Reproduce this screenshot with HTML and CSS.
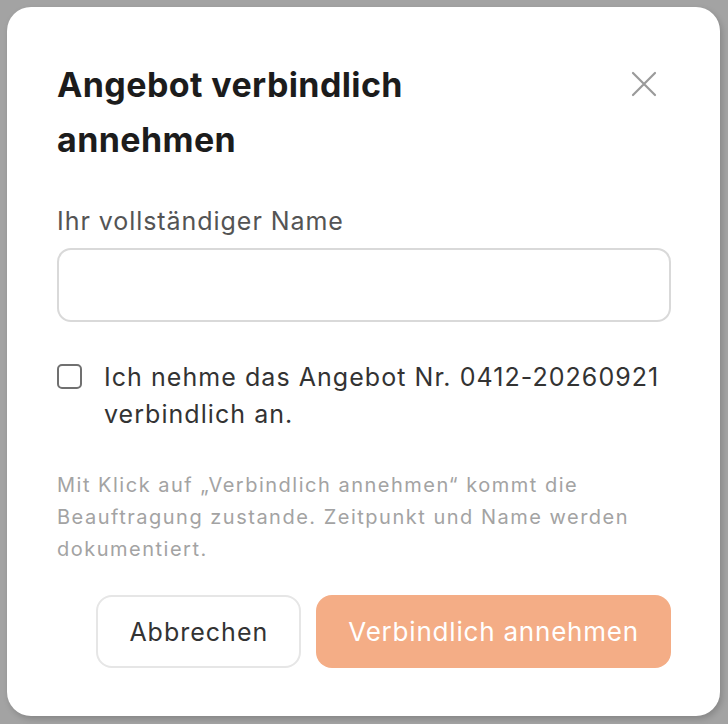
FILE: index.html
```html
<!DOCTYPE html>
<html lang="de">
<head>
    <meta charset="UTF-8">
    <meta name="viewport" content="width=device-width, initial-scale=1.0">
    <title>Angebot annehmen</title>
    <link rel="stylesheet" href="styles.css">
</head>
<body>
    <!-- Dialog -->
    <div class="modal">
        <div class="modal-header">
            <h2 class="modal-title">Angebot verbindlich annehmen</h2>
            <button class="close-btn" aria-label="Schließen">
                <svg width="26" height="26" viewBox="0 0 26 26">
                    <path d="M2 2 L24 24 M24 2 L2 24" stroke="#9a9a9a" stroke-width="2.2" stroke-linecap="round" fill="none"/>
                </svg>
            </button>
        </div>

        <div class="form-group">
            <label for="name">Ihr vollständiger Name</label>
            <input type="text" id="name">
        </div>

        <label class="check-row">
            <input type="checkbox">
            <span class="checkbox"></span>
            <span>Ich nehme das Angebot Nr. 0412-20260921 verbindlich an.</span>
        </label>

        <p class="hint">Mit Klick auf „Verbindlich annehmen“ kommt die Beauftragung zustande. Zeitpunkt und Name werden dokumentiert.</p>

        <div class="actions">
            <button class="button button-secondary">Abbrechen</button>
            <button class="button button-primary">Verbindlich annehmen</button>
        </div>
    </div>
</body>
</html>
```

FILE: styles.css
```css
* {
    margin: 0;
    padding: 0;
    box-sizing: border-box;
}

body {
    font-family: 'Inter', 'Noto Sans', sans-serif;
    background: #a3a3a3;
    padding: 7px 8px 8px 7px;
    min-height: 100vh;
}

/* Dialog */
.modal {
    background: #fff;
    border-radius: 24px;
    box-shadow: 2px 3px 6px rgba(0,0,0,0.18);
    padding: 56px 49px 48px 50px;
    height: 709px;
}

.modal-header {
    display: flex;
    justify-content: space-between;
    align-items: flex-start;
}

.modal-title {
    font-size: 34px;
    font-weight: 700;
    line-height: 55px;
    color: #1c1c1c;
    max-width: 440px;
    letter-spacing: 0.4px;
    margin-top: -6px;
}

.close-btn {
    background: none;
    border: none;
    cursor: pointer;
    margin-top: 8px;
    margin-right: 14px;
    width: 26px;
    height: 26px;
}

.close-btn svg {
    display: block;
}

.form-group {
    margin-top: 38px;
}

.form-group label {
    display: block;
    font-size: 25px;
    letter-spacing: 0.95px;
    color: #545454;
    line-height: 32px;
    margin-bottom: 11px;
}

.form-group input {
    width: 100%;
    height: 74px;
    border: 2px solid #d9d9d9;
    border-radius: 14px;
    font-size: 22px;
    padding: 0 18px;
    font-family: inherit;
}

.check-row {
    display: flex;
    align-items: flex-start;
    gap: 22px;
    margin-top: 37px;
    font-size: 25px;
    letter-spacing: 1.05px;
    line-height: 37px;
    color: #333;
    cursor: pointer;
}

.check-row input {
    display: none;
}

.checkbox {
    flex: none;
    width: 25px;
    height: 25px;
    border: 2px solid #707070;
    border-radius: 5px;
    margin-top: 5px;
}

.hint {
    margin-top: 36px;
    font-size: 20px;
    letter-spacing: 1.5px;
    line-height: 32px;
    color: #a3a3a3;
}

.actions {
    display: flex;
    justify-content: flex-end;
    gap: 15px;
    margin-top: 30px;
}

.button {
    height: 73px;
    border-radius: 16px;
    font-family: inherit;
    font-size: 25px;
    letter-spacing: 1px;
    cursor: pointer;
    padding: 0 32px;
}

.button-secondary {
    background: #fff;
    border: 2px solid #e6e6e6;
    color: #333;
    padding: 0 31px;
}

.button-primary {
    background: #f4ad86;
    border: none;
    color: #fff;
    font-size: 26px;
    letter-spacing: 0.8px;
}
```
